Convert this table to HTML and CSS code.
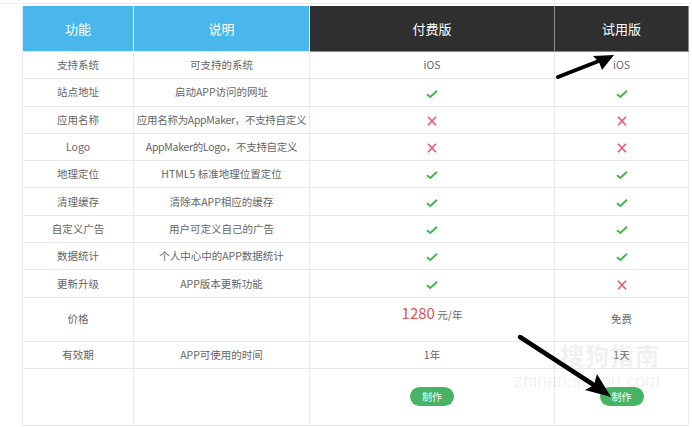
FILE: index.html
```html
<!DOCTYPE html>
<html lang="zh">
<head>
<meta charset="utf-8">
<link rel="stylesheet" href="styles.css">
</head>
<body>
<div class="topline"></div>
<div class="wrap">
<table class="cmp">
  <colgroup>
    <col class="c1"><col class="c2"><col class="c3"><col class="c4">
  </colgroup>
  <thead>
    <tr>
      <th class="blue">功能</th>
      <th class="blue">说明</th>
      <th class="dark">付费版</th>
      <th class="dark">试用版</th>
    </tr>
  </thead>
  <tbody>
    <tr><td>支持系统</td><td>可支持的系统</td><td>iOS</td><td>iOS</td></tr>
    <tr><td>站点地址</td><td>启动APP访问的网址</td><td><i class="ok"></i></td><td><i class="ok"></i></td></tr>
    <tr><td>应用名称</td><td class="tight">应用名称为AppMaker，不支持自定义</td><td><i class="no"></i></td><td><i class="no"></i></td></tr>
    <tr><td>Logo</td><td class="tight">AppMaker的Logo，不支持自定义</td><td><i class="no"></i></td><td><i class="no"></i></td></tr>
    <tr><td>地理定位</td><td>HTML5 标准地理位置定位</td><td><i class="ok"></i></td><td><i class="ok"></i></td></tr>
    <tr><td>清理缓存</td><td>清除本APP相应的缓存</td><td><i class="ok"></i></td><td><i class="ok"></i></td></tr>
    <tr><td>自定义广告</td><td>用户可定义自己的广告</td><td><i class="ok"></i></td><td><i class="ok"></i></td></tr>
    <tr><td>数据统计</td><td>个人中心中的APP数据统计</td><td><i class="ok"></i></td><td><i class="ok"></i></td></tr>
    <tr><td>更新升级</td><td>APP版本更新功能</td><td><i class="ok"></i></td><td><i class="no"></i></td></tr>
    <tr class="price"><td>价格</td><td></td><td><span class="up"><span class="num">1280</span> 元/年</span></td><td>免费</td></tr>
    <tr><td>有效期</td><td>APP可使用的时间</td><td>1年</td><td>1天</td></tr>
    <tr class="btns"><td></td><td></td><td><span class="btn">制作</span></td><td><span class="btn">制作</span></td></tr>
  </tbody>
</table>
<div class="watermark"><span class="wm1">搜狗指南</span><span class="wm2">zhinan.sogou.com</span></div>
<svg class="arrows" width="692" height="427" viewBox="0 0 692 427">
  <path d="M558 73 L604 55" stroke="#000" stroke-width="4" stroke-linecap="round" fill="none"/>
  <path d="M614 51 L593 52 L599 58 L602 66 Z" fill="#000"/>
  <path d="M520 333 L600 385" stroke="#000" stroke-width="4.5" stroke-linecap="round" fill="none"/>
  <path d="M611 393 L597 370 L594 381 L585 386 Z" fill="#000"/>
</svg>
</div>
</body>
</html>
```
FILE: styles.css
```css
html, body {
  margin: 0;
  padding: 0;
  background: #fff;
}
body {
  font-family: "Noto Sans CJK SC", "Noto Sans", sans-serif;
  color: #666;
  width: 692px;
  height: 427px;
  overflow: hidden;
}
.topline {
  height: 3px;
  border-bottom: 1px solid #ececec;
  margin-right: 8px;
}
.wrap {
  position: relative;
  padding: 2px 0 0 22px;
}
.cmp {
  border-collapse: collapse;
  table-layout: fixed;
  width: 666px;
  font-size: 10.5px;
  text-align: center;
}
.c1 { width: 111px; }
.c2 { width: 176px; }
.c3 { width: 245px; }
.c4 { width: 134px; }
.cmp th {
  height: 45px;
  padding: 0;
  font-size: 13px;
  font-weight: normal;
  color: #fff;
  border: 1px solid #e6e6e6;
  border-top: none;
}
.cmp th.blue { background: #4ab7ec; border-color: #d6eef9; }
.cmp th.dark { background: #2f2f2f; border-color: #8a8a8a; }
.cmp td {
  height: 26.3px;
  padding: 0;
  border: 1px solid #e8e8e8;
  vertical-align: middle;
  line-height: 14px;
  white-space: nowrap;
}
.cmp td.tight { letter-spacing: -0.3px; }
.cmp tr.price td { height: 43px; }
.cmp tr.btns td { height: 56px; }
.up { position: relative; top: -5px; }
.num { color: #e0505a; font-size: 15px; }
.ok, .no {
  display: inline-block;
  width: 12px;
  height: 10px;
  vertical-align: middle;
  background-repeat: no-repeat;
}
.ok {
  background-image: url("data:image/svg+xml;utf8,<svg xmlns='http://www.w3.org/2000/svg' width='12' height='10' viewBox='0 0 12 10'><path d='M1 5.2 L4.4 8 L11 1.8' stroke='%2343b649' stroke-width='2' fill='none'/></svg>");
}
.no {
  background-image: url("data:image/svg+xml;utf8,<svg xmlns='http://www.w3.org/2000/svg' width='12' height='10' viewBox='0 0 12 10'><path d='M2 0.8 L10 9.2 M10 0.8 L2 9.2' stroke='%23e8566a' stroke-width='1.6' fill='none'/></svg>");
}
.btn {
  display: inline-block;
  width: 44px;
  height: 19px;
  line-height: 19px;
  border-radius: 10px;
  background: #46b462;
  color: #fff;
  font-size: 10px;
  vertical-align: middle;
}
.watermark {
  position: absolute;
  left: 514px;
  top: 336px;
  width: 160px;
  color: rgba(190, 190, 190, 0.22);
  pointer-events: none;
}
.wm1 {
  display: block;
  font-size: 24px;
  font-weight: bold;
  letter-spacing: 1px;
  padding-left: 46px;
  line-height: 30px;
}
.wm2 {
  display: block;
  font-family: "Liberation Sans", sans-serif;
  font-size: 18px;
  line-height: 22px;
  margin-left: 0;
}
.arrows {
  position: absolute;
  left: 0;
  top: 0;
  pointer-events: none;
}
```
